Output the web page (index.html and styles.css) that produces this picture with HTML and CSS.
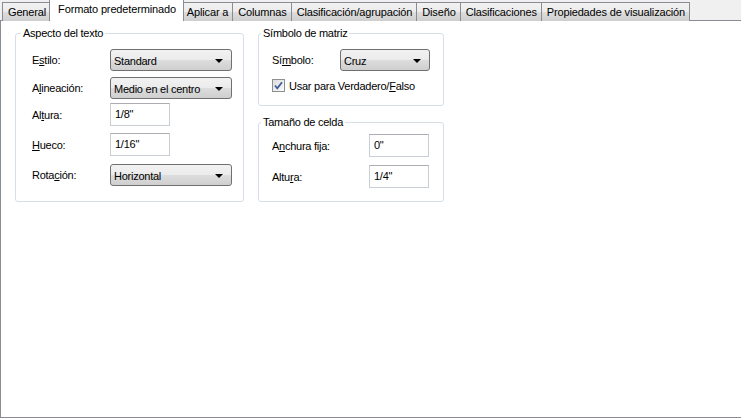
FILE: index.html
```html
<!DOCTYPE html>
<html lang="es">
<head>
    <meta charset="UTF-8">
    <title>Formato predeterminado</title>
    <link rel="stylesheet" href="styles.css">
</head>
<body>
    <div class="tabs">
        <div class="tab">General</div>
        <div class="tab active">Formato predeterminado</div>
        <div class="tab">Aplicar a</div>
        <div class="tab">Columnas</div>
        <div class="tab">Clasificación/agrupación</div>
        <div class="tab">Diseño</div>
        <div class="tab">Clasificaciones</div>
        <div class="tab">Propiedades de visualización</div>
    </div>

    <div class="pane">
        <fieldset class="group group-text">
            <legend>Aspecto del texto</legend>
            <div class="row row-first">
                <span class="lbl">E<u>s</u>tilo:</span>
                <div class="combo wide">Standard<span class="arrow"></span></div>
            </div>
            <div class="row row-2">
                <span class="lbl">A<u>l</u>ineación:</span>
                <div class="combo wide">Medio en el centro<span class="arrow"></span></div>
            </div>
            <div class="row row-3">
                <span class="lbl">Al<u>t</u>ura:</span>
                <div class="field">1/8"</div>
            </div>
            <div class="row row-4">
                <span class="lbl"><u>H</u>ueco:</span>
                <div class="field">1/16"</div>
            </div>
            <div class="row row-5">
                <span class="lbl">Rota<u>c</u>ión:</span>
                <div class="combo wide">Horizontal<span class="arrow"></span></div>
            </div>
        </fieldset>

        <div class="side">
            <fieldset class="group group-matrix">
                <legend>Símbolo de matriz</legend>
                <div class="row row-first">
                    <span class="lbl">Sí<u>m</u>bolo:</span>
                    <div class="combo narrow">Cruz<span class="arrow"></span></div>
                </div>
                <label class="check">
                    <span class="box">
                        <svg width="11" height="11" viewBox="0 0 11 11">
                            <path d="M2 5.5 L4.3 8.3 L9 2.2" fill="none" stroke="#3f5c9a" stroke-width="1.8"/>
                        </svg>
                    </span>
                    <span>Usar para Verdadero/<u>F</u>also</span>
                </label>
            </fieldset>

            <fieldset class="group group-cell">
                <legend>Tamaño de celda</legend>
                <div class="row row-first">
                    <span class="lbl">A<u>n</u>chura fija:</span>
                    <div class="field">0"</div>
                </div>
                <div class="row row-2">
                    <span class="lbl">Altu<u>r</u>a:</span>
                    <div class="field">1/4"</div>
                </div>
            </fieldset>
        </div>
    </div>
</body>
</html>
```

FILE: styles.css
```css
html, body {
    margin: 0;
    height: 100%;
}
body {
    font-family: "Liberation Sans", Arial, sans-serif;
    font-size: 11px;
    letter-spacing: -0.25px;
    color: #000;
    background-color: #f0f0f0;
    display: flex;
    flex-direction: column;
    overflow: hidden;
}
u {
    text-decoration: underline;
    text-underline-offset: 1px;
}

/* tab strip */
.tabs {
    display: flex;
    height: 21px;
    padding-left: 2px;
    align-items: flex-end;
    position: relative;
    z-index: 1;
    letter-spacing: -0.15px;
}
.tab {
    height: 18px;
    line-height: 18px;
    padding: 0 4px 0 5px;
    border: 1px solid #898c95;
    border-bottom: none;
    border-left: none;
    background: linear-gradient(#f2f2f2, #ebebeb 50%, #dddddd 50%, #cfcfcf);
    white-space: nowrap;
}
.tab:first-child {
    border-left: 1px solid #898c95;
}
.tab.active {
    height: 21px;
    line-height: 19px;
    margin: 0 -2px 0 -2px;
    padding: 0 7px 0 8px;
    background: #fff;
    border-left: 1px solid #898c95;
    position: relative;
    z-index: 2;
}
.tab.active + .tab {
    border-left: none;
}

/* page */
.pane {
    flex: 1;
    height: 395px;
    margin-top: -1px;
    border: 1px solid #898c95;
    border-right: none;
    background: #fff;
    display: flex;
    align-items: flex-start;
    gap: 14px;
    padding: 6px 0 0 14px;
}
.side {
    display: flex;
    flex-direction: column;
    gap: 10px;
}

.group {
    margin: 0;
    border: 1px solid #d5dfe5;
    border-radius: 3px;
    padding: 0 0 0 16px;
    box-sizing: border-box;
}
.group legend {
    padding: 0 2px;
    margin-left: -11px;
    line-height: 13px;
}
.group-text {
    width: 229px;
    height: 175px;
}
.group-matrix {
    width: 186px;
    height: 79px;
    padding-left: 13px;
}
.group-cell {
    width: 186px;
    height: 86px;
    padding-left: 13px;
}

.row {
    display: flex;
    align-items: center;
}
.row-first { margin-top: 9px; }
.group-text .row-2 { margin-top: 6px; }
.group-text .row-3 { margin-top: 4px; }
.group-text .row-4 { margin-top: 7px; }
.group-text .row-5 { margin-top: 8px; }
.group-cell .row-first { margin-top: 5px; }
.group-cell .row-2 { margin-top: 8px; }

.lbl {
    width: 78px;
    flex: none;
}
.group-matrix .lbl { width: 68px; }
.group-cell .lbl { width: 97px; }

/* controls */
.combo {
    position: relative;
    height: 22px;
    line-height: 22px;
    box-sizing: border-box;
    border: 1px solid #707070;
    border-radius: 3px;
    padding-left: 3px;
    background: linear-gradient(#f2f2f2, #ebebeb 50%, #dddddd 50%, #cfcfcf);
    white-space: nowrap;
}
.combo.wide { width: 122px; }
.combo.narrow { width: 90px; }
.arrow {
    position: absolute;
    right: 8px;
    top: 9px;
    width: 0;
    height: 0;
    border-left: 4px solid transparent;
    border-right: 4px solid transparent;
    border-top: 4px solid #000;
}

.field {
    width: 60px;
    height: 23px;
    line-height: 21px;
    box-sizing: border-box;
    border: 1px solid #c9cdd4;
    border-top-color: #abadb3;
    padding-left: 4px;
    background: #fff;
}

.check {
    display: flex;
    align-items: center;
    gap: 4px;
    margin-top: 8px;
}
.box {
    width: 11px;
    height: 11px;
    border: 1px solid #8e8f8f;
    background: linear-gradient(135deg, #dcdcdc, #fbfbfb);
    display: flex;
}
```
